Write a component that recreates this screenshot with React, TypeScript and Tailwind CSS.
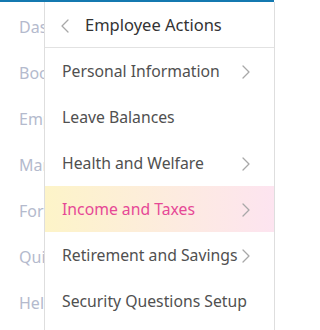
import { ChevronLeft, ChevronRight } from "lucide-react";

const sideItems = ["Dashboard", "Bookings", "Employee", "Manager", "Forms", "Quick Links", "Help"];

const actions = [
  { name: "Personal Information", sub: true },
  { name: "Leave Balances", sub: false },
  { name: "Health and Welfare", sub: true },
  { name: "Income and Taxes", sub: true, active: true },
  { name: "Retirement and Savings", sub: true },
  { name: "Security Questions Setup", sub: false },
];

export default function App() {
  return (
    <div
      className="w-[277px] h-[330px] overflow-hidden bg-white flex flex-col"
      style={{ fontFamily: '"Noto Sans", "Open Sans", sans-serif' }}
    >
      <div className="h-[2px] w-[274px] bg-[#1479b0] shrink-0" />
      <div className="flex flex-1 min-h-0">
        {/* Faded main sidebar underneath */}
        <aside className="w-[44px] shrink-0 overflow-hidden pt-[2px]">
          {sideItems.map((item) => (
            <div
              key={item}
              className="h-[46px] flex items-center pl-[19px] whitespace-nowrap text-[16px] text-[#b4bacd]"
            >
              {item}
            </div>
          ))}
        </aside>

        {/* Employee actions flyout */}
        <div className="w-[231px] shrink-0 border-l border-r border-[#dedede] flex flex-col">
          <div className="h-[46px] shrink-0 flex items-center pt-[2px] border-b border-[#e2e2e2]">
            <ChevronLeft className="w-[24px] h-[24px] ml-[8px] text-[#a8a8a8]" strokeWidth={1.3} />
            <span className="ml-[8px] text-[16.5px] text-[#333]">Employee Actions</span>
          </div>
          {actions.map((a) => (
            <div
              key={a.name}
              className={`h-[46px] shrink-0 flex items-center pt-[1px] pl-[17px] pr-[16px] text-[15.75px] whitespace-nowrap ${
                a.active
                  ? "bg-gradient-to-r from-[#fdf4c8] to-[#fde4f0] text-[#e64896]"
                  : "text-[#505050]"
              }`}
            >
              <span className="flex-1">{a.name}</span>
              {a.sub && (
                <ChevronRight className="w-[24px] h-[24px] -ml-[9px] text-[#a8a8a8] shrink-0" strokeWidth={1.3} />
              )}
            </div>
          ))}
        </div>
      </div>
    </div>
  );
}
